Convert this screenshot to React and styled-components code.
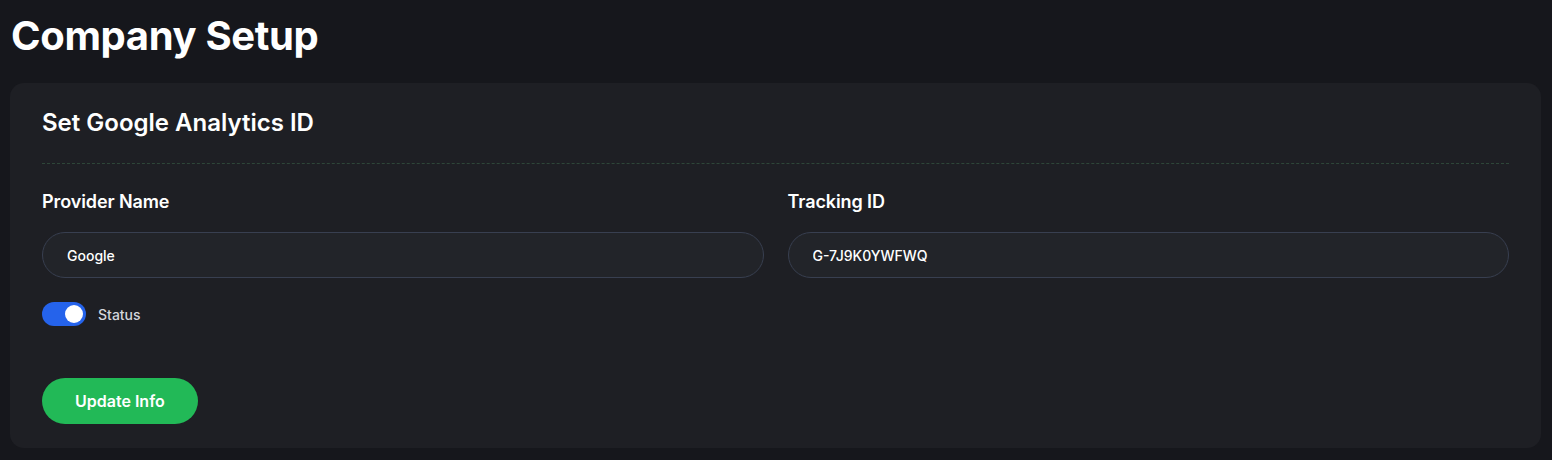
import React from "react";
import styled, { createGlobalStyle } from "styled-components";

const Global = createGlobalStyle`
  html, body { margin: 0; padding: 0; background: #16171c; }
  body { font-family: Inter, "Noto Sans", sans-serif; color: #ffffff; }
  * { box-sizing: border-box; }
`;

const Page = styled.div`
  padding: 5px 11px 13px 10px;
  background: #16171c;
  min-height: 460px;
`;

const PageTitle = styled.h1`
  margin: 0 0 16px 1px;
  font-size: 40px;
  line-height: 62px;
  font-weight: 700;
  letter-spacing: -0.35px;
  color: #ffffff;
`;

const Card = styled.section`
  background: #1e1f24;
  border-radius: 14px;
  padding: 24px 32px 24px;
`;

const CardHeader = styled.div`
  padding-bottom: 24px;
  border-bottom: 1px dashed #2e4639;
`;

const CardTitle = styled.h2`
  margin: 0;
  font-size: 24px;
  line-height: 32px;
  font-weight: 600;
  color: #ffffff;
`;

const FormGrid = styled.div`
  display: grid;
  grid-template-columns: 1fr 1fr;
  column-gap: 24px;
  margin-top: 26px;
`;

const Field = styled.div`
  display: flex;
  flex-direction: column;
  gap: 18px;
`;

const Label = styled.label`
  font-size: 18px;
  line-height: 24px;
  font-weight: 600;
  letter-spacing: -0.1px;
  color: #ffffff;
`;

const Input = styled.input`
  height: 46px;
  border-radius: 999px;
  border: 1px solid #383f50;
  background: #222429;
  color: #ffffff;
  padding: 0 24px;
  font-family: Inter, "Noto Sans", sans-serif;
  font-size: 14px;
  font-weight: 500;
  outline: none;
`;

const ToggleRow = styled.div`
  display: flex;
  align-items: center;
  gap: 12px;
  margin-top: 24px;
`;

const Track = styled.span`
  position: relative;
  display: inline-block;
  width: 44px;
  height: 24px;
  border-radius: 999px;
  background: ${(p) => (p.$on ? "#2563eb" : "#3a3f4b")};
`;

const Knob = styled.span`
  position: absolute;
  top: 3px;
  left: ${(p) => (p.$on ? "23px" : "3px")};
  width: 18px;
  height: 18px;
  border-radius: 50%;
  background: #ffffff;
`;

const ToggleLabel = styled.span`
  font-size: 14px;
  font-weight: 500;
  color: #d4d6dc;
`;

const Actions = styled.div`
  margin-top: 52px;
`;

const Button = styled.button`
  height: 46px;
  padding: 0 33px;
  border: none;
  border-radius: 999px;
  background: #22b957;
  color: #ffffff;
  font-family: Inter, "Noto Sans", sans-serif;
  font-size: 16px;
  font-weight: 600;
  cursor: pointer;
`;

export default function App() {
  return (
    <>
      <Global />
      <Page>
        <PageTitle>Company Setup</PageTitle>
        <Card>
          <CardHeader>
            <CardTitle>Set Google Analytics ID</CardTitle>
          </CardHeader>
          <FormGrid>
            <Field>
              <Label>Provider Name</Label>
              <Input defaultValue="Google" />
            </Field>
            <Field>
              <Label>Tracking ID</Label>
              <Input defaultValue="G-7J9K0YWFWQ" />
            </Field>
          </FormGrid>
          <ToggleRow>
            <Track $on>
              <Knob $on />
            </Track>
            <ToggleLabel>Status</ToggleLabel>
          </ToggleRow>
          <Actions>
            <Button>Update Info</Button>
          </Actions>
        </Card>
      </Page>
    </>
  );
}
